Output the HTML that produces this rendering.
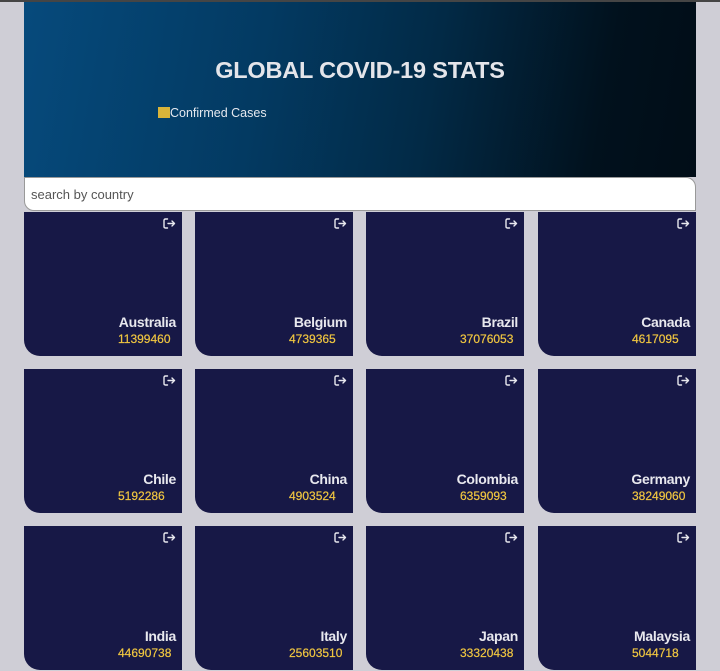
<!DOCTYPE html>
<html><head><style>
*{margin:0;padding:0;box-sizing:border-box}
body{width:720px;height:671px;background:#cfced6;font-family:"Liberation Sans",sans-serif;position:relative;overflow:hidden}
.top{position:absolute;left:0;top:0;width:720px;height:2px;background:#454545}
.hero{position:absolute;left:24px;top:2px;width:672px;height:175px;background:linear-gradient(100deg,#064a7c 0%,#033a62 35%,#022a46 60%,#01111d 85%,#010d17 100%)}
.hero h1{position:absolute;left:0;width:672px;top:55px;text-align:center;color:#e4e5ea;font-size:23.5px;font-weight:bold;letter-spacing:-0.2px}
.leg{position:absolute;left:134px;top:104px;color:#e4e8ef;font-size:12.5px;display:flex;align-items:flex-start}
.leg i{display:inline-block;width:12px;height:11px;background:#d9b43a;margin-top:1px}
.search{position:absolute;left:24px;top:177px;width:672px;height:34px;background:#fff;border:1px solid #999;border-radius:0 10px 0 10px;color:#555;font-size:13px;padding:9px 6px}
.card{position:absolute;width:158px;height:144px;background:#171846;border-bottom-left-radius:16px}
.card svg{position:absolute;right:6px;top:6px}
.n{position:absolute;right:6px;top:102px;color:#e8e8ee;font-weight:bold;font-size:14px;letter-spacing:-0.3px}
.v{position:absolute;left:94px;top:120px;color:#f0c640;font-size:12px;-webkit-text-stroke:0.2px #f0c640}
</style></head><body>
<div class="top"></div>
<div class="hero"><h1>GLOBAL COVID-19 STATS</h1><div class="leg"><i></i>Confirmed Cases</div></div>
<div class="search">search by country</div>
<div id="g"></div>
<script>
var d=[["Australia","11399460"],["Belgium","4739365"],["Brazil","37076053"],["Canada","4617095"],["Chile","5192286"],["China","4903524"],["Colombia","6359093"],["Germany","38249060"],["India","44690738"],["Italy","25603510"],["Japan","33320438"],["Malaysia","5044718"]];
var xs=[24,195,366,538],ys=[212,369,526],h="";
d.forEach(function(c,i){h+='<div class="card" style="left:'+xs[i%4]+'px;top:'+ys[Math.floor(i/4)]+'px"><svg width="13" height="11" viewBox="0 0 13 11" fill="none" stroke="#e8e8ee" stroke-width="1.4" stroke-linecap="round" stroke-linejoin="round"><path d="M4.5 1H2.5Q1 1 1 2.5V8.5Q1 10 2.5 10H4.5M5 5.5H11.5M9 3L11.5 5.5L9 8"/></svg><div class="n">'+c[0]+'</div><div class="v">'+c[1]+'</div></div>'});
document.getElementById("g").innerHTML=h;
</script>
</body></html>
